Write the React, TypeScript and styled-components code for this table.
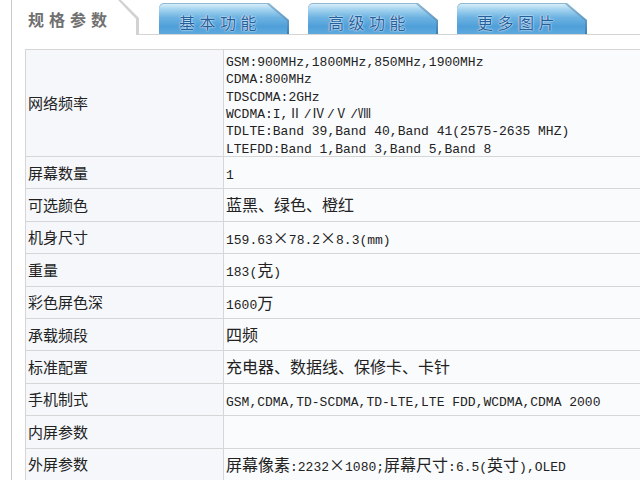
import React from 'react';
import styled, { createGlobalStyle } from 'styled-components';

const Global = createGlobalStyle`
  html, body { margin: 0; padding: 0; background: #fff; overflow: hidden; }
  body { font-family: "Noto Sans CJK SC", "Liberation Sans", sans-serif; }
`;

const Frame = styled.div`
  margin-left: 11px;
  border-left: 1px solid #c9c9c9;
  height: 480px;
`;

const TabBar = styled.div`
  display: flex;
  align-items: flex-end;
  gap: 19px;
  height: 34px;
  border-bottom: 1px solid #d4d4d4;
`;

const ActiveTab = styled.div`
  position: relative;
  width: 127px;
  height: 35px;
  margin-bottom: -1px;
  margin-right: 1px;
  box-sizing: border-box;
  padding: 9px 0 0 16px;
  font-size: 16px;
  font-weight: 700;
  letter-spacing: 5px;
  color: #707070;
  line-height: 20px;
  &::before {
    content: '';
    position: absolute;
    inset: 0;
    background: #d2d2d2;
    clip-path: polygon(0 0, 109px 0, 127px 18px, 127px 100%, 0 100%);
  }
  &::after {
    content: '';
    position: absolute;
    inset: 0;
    background: #fff;
    clip-path: polygon(0 0, 106px 0, 124px 19px, 124px 100%, 0 100%);
  }
  span { position: relative; z-index: 1; }
`;

const Tab = styled.div`
  position: relative;
  width: 130px;
  height: 31px;
  box-sizing: border-box;
  padding: 9px 0 0 20px;
  font-size: 16px;
  letter-spacing: 4.5px;
  line-height: 20px;
  color: #23609c;
  text-shadow: 0 0 2px #fff, 0 0 1px #fff;
  &::before {
    content: '';
    position: absolute;
    inset: 0;
    border-top-left-radius: 5px;
    background: linear-gradient(#8fb8d2, #3d7fb5);
    clip-path: polygon(0 0, 110px 0, 130px 17px, 130px 100%, 0 100%);
  }
  &::after {
    content: '';
    position: absolute;
    left: 0;
    top: 1px;
    right: 2px;
    bottom: 0;
    border-top-left-radius: 5px;
    background: linear-gradient(#d6edf9 0%, #a4d3ef 18%, #6db3e2 45%, #4f9fd9 75%, #5eaade 100%);
    clip-path: polygon(0 0, 108px 0, 128px 17px, 128px 100%, 0 100%);
  }
  span { position: relative; z-index: 1; }
`;

const Content = styled.div`
  padding: 14px 0 0 13px;
`;

const SpecTable = styled.table`
  border-collapse: collapse;
  width: 616px;
  table-layout: fixed;
`;

const Row = styled.tr<{ $tall?: boolean }>`
  height: ${(p) => (p.$tall ? '107px' : '32.4px')};
`;

const LabelCell = styled.td`
  width: 198px;
  box-sizing: border-box;
  border: 1px solid #d6d6d6;
  background: #f5f7fa;
  padding: 0 2px;
  font-size: 15px;
  line-height: 18px;
  color: #222;
  vertical-align: middle;
`;

const ValueCell = styled.td`
  border: 1px solid #d6d6d6;
  background: #fafbfd;
  padding: 0 2px;
  font-size: 16px;
  color: #222;
  vertical-align: middle;
  white-space: pre;
  overflow: hidden;
`;

const Line = styled.div`
  height: 17.3px;
  line-height: 17.3px;
`;

const Latin = styled.span`
  font-family: "Liberation Mono", monospace;
  font-size: 13px;
  line-height: 12px;
`;

const Roman = styled.span`
  font-size: 13px;
  line-height: 12px;
  letter-spacing: 2.4px;
`;

const Wide = styled.span``;

const CJK = /([\u3000-\u9fff\uff00-\uffef\u2160-\u217f\u00d7]+)/;
const ROMAN = /^[\u2160-\u217f]+$/;

function Mixed({ text }: { text: string }) {
  const parts = text.split(/([\u2160-\u217f]+)/).flatMap((p) =>
    ROMAN.test(p) ? [p] : p.split(CJK)
  ).filter((p) => p.length > 0);
  return (
    <>
      {parts.map((p, i) =>
        ROMAN.test(p) ? (
          <Roman key={i}>{p}</Roman>
        ) : CJK.test(p) ? (
          <Wide key={i}>{p}</Wide>
        ) : (
          <Latin key={i}>{p}</Latin>
        )
      )}
    </>
  );
}

const specs: { label: string; value: string[] }[] = [
  {
    label: '网络频率',
    value: [
      'GSM:900MHz,1800MHz,850MHz,1900MHz',
      'CDMA:800MHz',
      'TDSCDMA:2GHz',
      'WCDMA:I,Ⅱ/Ⅳ/Ⅴ/Ⅷ',
      'TDLTE:Band 39,Band 40,Band 41(2575-2635 MHZ)',
      'LTEFDD:Band 1,Band 3,Band 5,Band 8',
    ],
  },
  { label: '屏幕数量', value: ['1'] },
  { label: '可选颜色', value: ['蓝黑、绿色、橙红'] },
  { label: '机身尺寸', value: ['159.63×78.2×8.3(mm)'] },
  { label: '重量', value: ['183(克)'] },
  { label: '彩色屏色深', value: ['1600万'] },
  { label: '承载频段', value: ['四频'] },
  { label: '标准配置', value: ['充电器、数据线、保修卡、卡针'] },
  { label: '手机制式', value: ['GSM,CDMA,TD-SCDMA,TD-LTE,LTE FDD,WCDMA,CDMA 2000'] },
  { label: '内屏参数', value: [] },
  { label: '外屏参数', value: ['屏幕像素:2232×1080;屏幕尺寸:6.5(英寸),OLED'] },
];

const tabs = ['基本功能', '高级功能', '更多图片'];

export default function App() {
  return (
    <>
      <Global />
      <Frame>
        <TabBar>
          <ActiveTab>
            <span>规格参数</span>
          </ActiveTab>
          {tabs.map((t) => (
            <Tab key={t}>
              <span>{t}</span>
            </Tab>
          ))}
        </TabBar>
        <Content>
          <SpecTable>
            <tbody>
              {specs.map((s) => (
                <Row key={s.label} $tall={s.value.length > 1}>
                  <LabelCell>{s.label}</LabelCell>
                  <ValueCell>
                    {s.value.map((v, i) => (
                      <Line key={i}>
                        <Mixed text={v} />
                      </Line>
                    ))}
                  </ValueCell>
                </Row>
              ))}
            </tbody>
          </SpecTable>
        </Content>
      </Frame>
    </>
  );
}
